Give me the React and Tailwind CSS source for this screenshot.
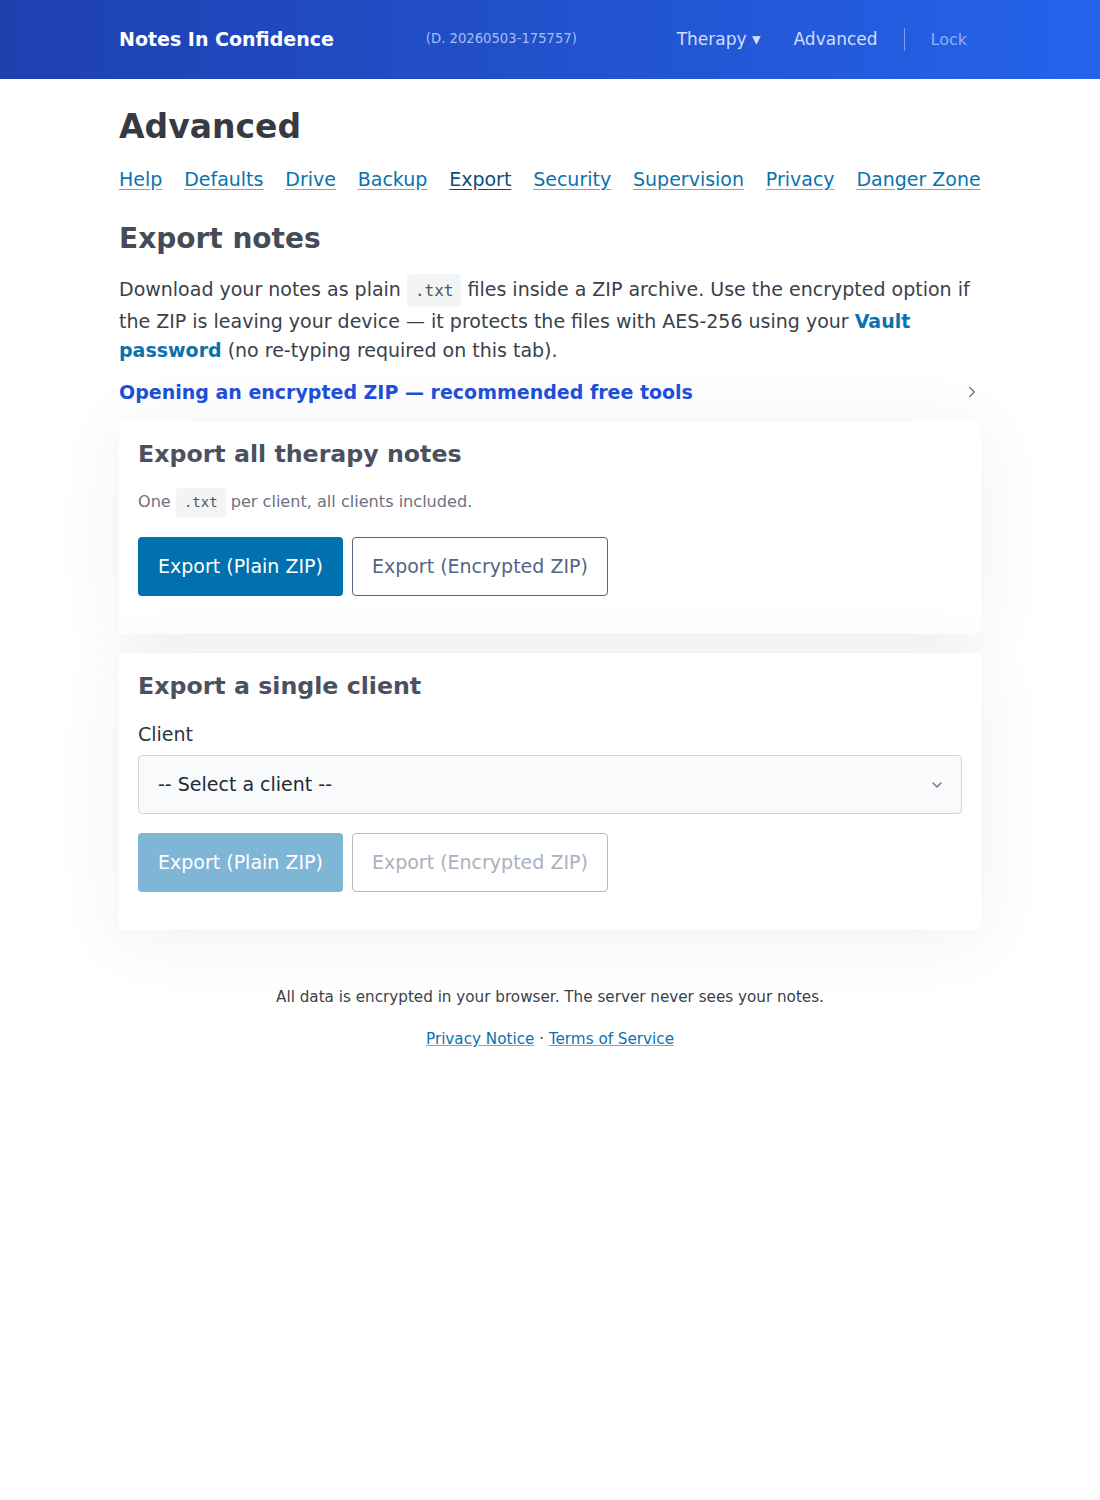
import { ChevronDown, ChevronRight } from 'lucide-react';

const font = { fontFamily: '"DejaVu Sans", "Liberation Sans", sans-serif' };

const tabs = ['Help', 'Defaults', 'Drive', 'Backup', 'Export', 'Security', 'Supervision', 'Privacy', 'Danger Zone'];

function Code({ children, small }) {
  return (
    <code
      className={`inline-block rounded bg-[#f3f4f6] text-[#4b5563] ${small ? 'px-[8px] py-[5px] text-[14px] leading-[19px]' : 'px-[8px] py-[6px] text-[16px] leading-[21px]'}`}
      style={{ fontFamily: '"DejaVu Sans Mono", "Liberation Mono", monospace' }}
    >
      {children}
    </code>
  );
}

function Buttons({ disabled }) {
  return (
    <div className="flex gap-[9px]">
      <button
        className={`h-[59px] rounded px-[20px] text-[19px] text-white ${disabled ? 'bg-[#7fb6d6]' : 'bg-[#0070ae]'}`}
      >
        Export (Plain ZIP)
      </button>
      <button
        className={`h-[59px] rounded border bg-white px-[19px] text-[19px] ${disabled ? 'border-[#b3b9c6] text-[#a9b1c0]' : 'border-[#566385] text-[#566385]'}`}
      >
        Export (Encrypted ZIP)
      </button>
    </div>
  );
}

export default function App() {
  return (
    <div className="min-h-[1500px] bg-white" style={font}>
      {/* top bar */}
      <header className="h-[79px] bg-gradient-to-r from-[#1e40af] to-[#2563eb]">
        <div className="mx-auto flex h-full w-[862px] items-center">
          <div className="text-[19px] font-bold text-white">Notes In Confidence</div>
          <div className="ml-[92px] -mt-[2px] text-[13.2px] text-[#a9bdf3]">(D. 20260503-175757)</div>
          <nav className="ml-auto mr-[14px] flex items-center text-[17px]">
            <span className="text-[#d3defc]">Therapy ▾</span>
            <span className="ml-[33px] text-[#d3defc]">Advanced</span>
            <span className="ml-[26px] h-[23px] w-px bg-[#7f9ef0]" />
            <span className="ml-[26px] text-[16px] text-[#93aef5]">Lock</span>
          </nav>
        </div>
      </header>

      <main className="mx-auto w-[862px] pt-[31px] text-[#374151]">
        <h1 className="-mt-[4px] text-[33px] font-bold leading-[42px] text-[#363a43]">Advanced</h1>

        <div className="mt-[18px] flex gap-x-[21.8px] whitespace-nowrap text-[19px] leading-[26px]">
          {tabs.map((t) => (
            <a
              key={t}
              href="#"
              className={`underline underline-offset-[3px] ${t === 'Export' ? 'text-[#0b4f7c] decoration-[#0b4f7c]' : 'text-[#0b72ad] decoration-[#6aaed6]'}`}
            >
              {t}
            </a>
          ))}
        </div>

        <h2 className="mt-[29px] text-[28px] font-bold leading-[36px] text-[#464b55]">Export notes</h2>

        <p className="mt-[17px] text-[19px] leading-[29px] text-[#3a3f4a]">
          Download your notes as plain <Code>.txt</Code> files inside a ZIP archive. Use the encrypted option if the
          ZIP is leaving your device — it protects the files with AES-256 using your{' '}
          <a href="#" className="font-bold text-[#0b72ad]">Vault password</a> (no re-typing required on this tab).
        </p>

        <div className="mt-[13px] flex items-center justify-between">
          <span className="text-[19px] font-bold leading-[28px] text-[#1e4fd8]">
            Opening an encrypted ZIP — recommended free tools
          </span>
          <ChevronRight className="h-[18px] w-[18px] text-[#6b7280]" strokeWidth={1.8} />
        </div>

        <section className="mt-[15px] rounded bg-white px-[19px] pb-[38px] pt-[17px] shadow-[0_8px_70px_rgba(30,40,80,0.07)]">
          <h3 className="text-[23.7px] font-bold leading-[32px] text-[#4b5160]">Export all therapy notes</h3>
          <p className="mt-[17px] text-[16.1px] leading-[30px] text-[#6b7280]">
            One <Code small>.txt</Code> per client, all clients included.
          </p>
          <div className="mt-[20px]">
            <Buttons />
          </div>
        </section>

        <section className="mt-[19px] rounded bg-white px-[19px] pb-[38px] pt-[17px] shadow-[0_8px_70px_rgba(30,40,80,0.07)]">
          <h3 className="text-[23.7px] font-bold leading-[32px] text-[#4b5160]">Export a single client</h3>
          <label className="mt-[19px] block text-[19px] leading-[26px] text-[#2f3440]">Client</label>
          <div className="mt-[8px] flex h-[59px] items-center justify-between rounded border border-[#d1d5de] bg-[#f9fafb] pl-[19px] pr-[16px]">
            <span className="text-[19px] text-[#1f2937]">-- Select a client --</span>
            <ChevronDown className="h-[16px] w-[16px] text-[#6b7280]" strokeWidth={2} />
          </div>
          <div className="mt-[19px]">
            <Buttons disabled />
          </div>
        </section>

        <footer className="mt-[55px] text-center text-[15.2px] text-[#3a3f4a]">
          <p className="leading-[24px]">All data is encrypted in your browser. The server never sees your notes.</p>
          <p className="mt-[18px] leading-[24px]">
            <a href="#" className="text-[#0b72ad] underline decoration-[#6aaed6]">Privacy Notice</a>
            <span className="text-[#3a3f4a]"> · </span>
            <a href="#" className="text-[#0b72ad] underline decoration-[#6aaed6]">Terms of Service</a>
          </p>
        </footer>
      </main>
    </div>
  );
}
